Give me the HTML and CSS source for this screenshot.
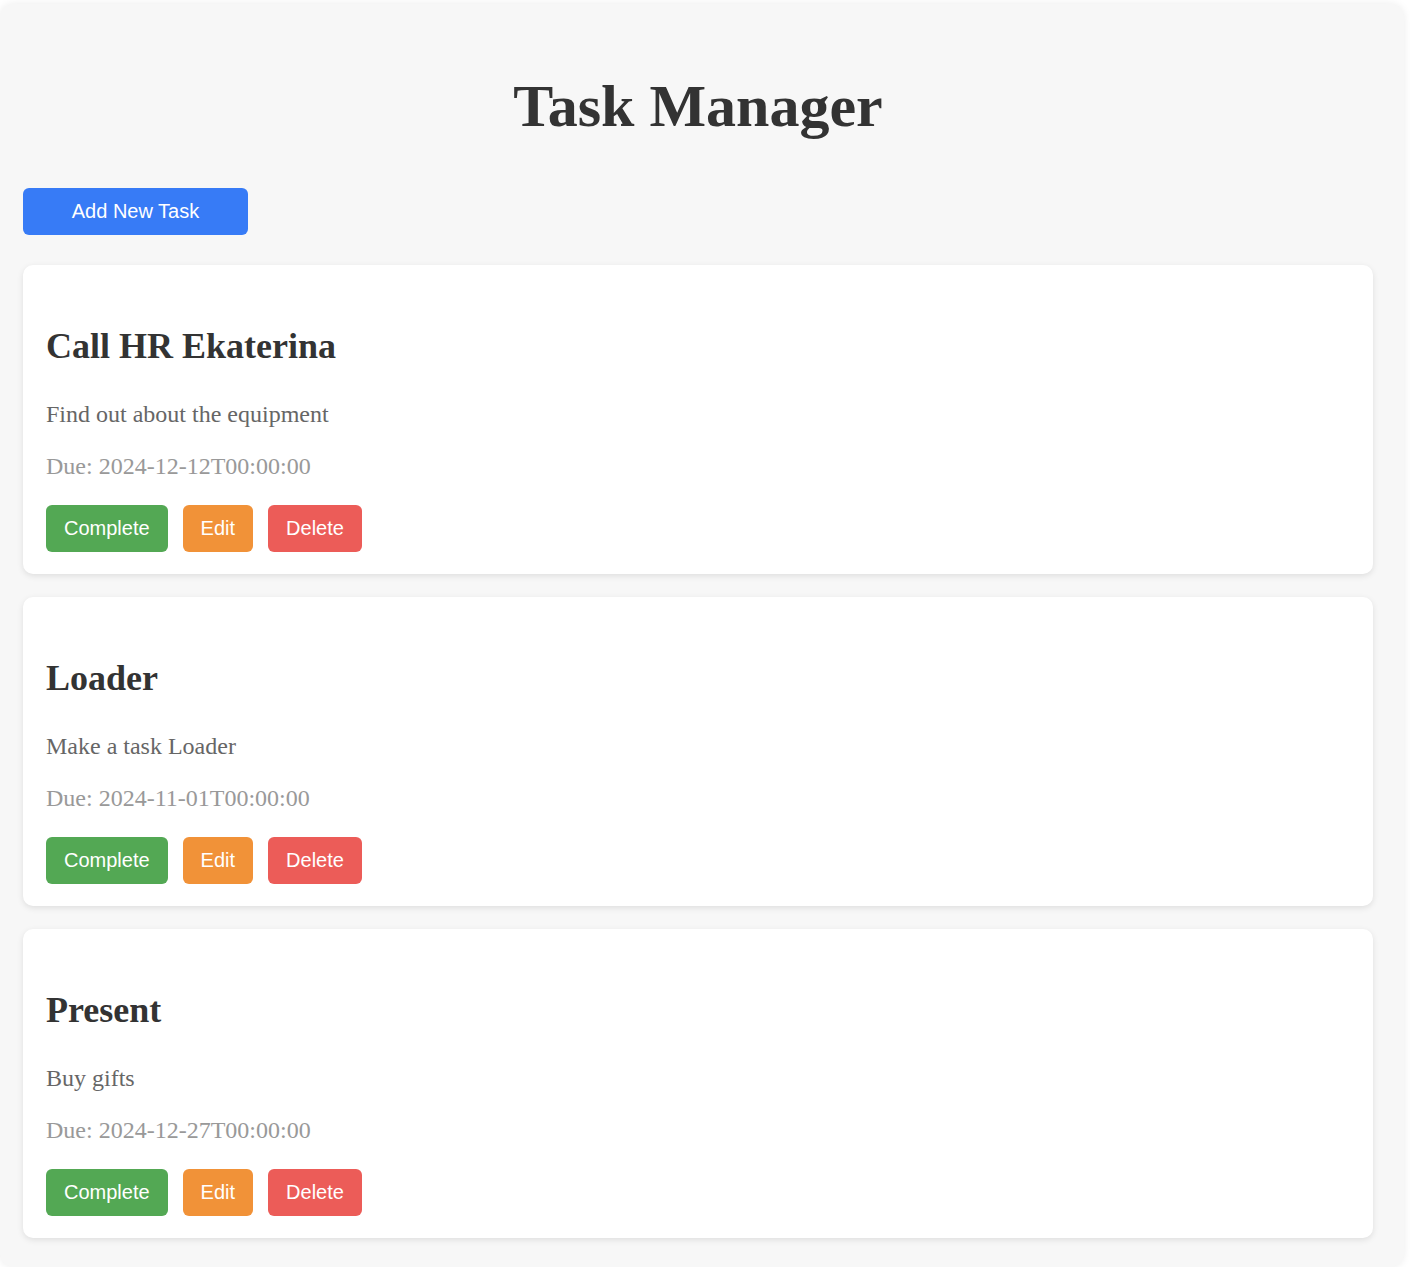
FILE: index.html
```html
<!DOCTYPE html>
<html>
<head>
<meta charset="utf-8">
<title>Task Manager</title>
<link rel="stylesheet" href="styles.css">
</head>
<body>
<div class="app">
  <h1 class="title">Task Manager</h1>
  <button class="btn btn-add">Add New Task</button>
  <div class="tasks">
    <div class="card">
      <h2 class="card-title">Call HR Ekaterina</h2>
      <p class="card-desc">Find out about the equipment</p>
      <p class="card-due">Due: 2024-12-12T00:00:00</p>
      <div class="actions">
        <button class="btn btn-complete">Complete</button>
        <button class="btn btn-edit">Edit</button>
        <button class="btn btn-delete">Delete</button>
      </div>
    </div>
    <div class="card">
      <h2 class="card-title">Loader</h2>
      <p class="card-desc">Make a task Loader</p>
      <p class="card-due">Due: 2024-11-01T00:00:00</p>
      <div class="actions">
        <button class="btn btn-complete">Complete</button>
        <button class="btn btn-edit">Edit</button>
        <button class="btn btn-delete">Delete</button>
      </div>
    </div>
    <div class="card">
      <h2 class="card-title">Present</h2>
      <p class="card-desc">Buy gifts</p>
      <p class="card-due">Due: 2024-12-27T00:00:00</p>
      <div class="actions">
        <button class="btn btn-complete">Complete</button>
        <button class="btn btn-edit">Edit</button>
        <button class="btn btn-delete">Delete</button>
      </div>
    </div>
  </div>
</div>
</body>
</html>
```
FILE: styles.css
```css
html, body {
  margin: 0;
  padding: 0;
  background: #ffffff;
}

body {
  font-family: "Liberation Serif", "Times New Roman", serif;
  color: #333333;
}

.app {
  margin: 4px 6px 0 0;
  padding: 20px 31px 30px 23px;
  background: #f7f7f7;
  border-radius: 14px;
  box-shadow: 0 0 8px rgba(0, 0, 0, 0.08);
  height: 1263px;
  box-sizing: border-box;
}

.title {
  margin: 47px 0 47px 0;
  text-align: center;
  font-size: 60px;
  font-weight: bold;
  line-height: 70px;
  color: #333333;
}

.btn {
  font-family: "Liberation Sans", Arial, sans-serif;
  font-size: 20px;
  line-height: 23px;
  color: #ffffff;
  border: none;
  border-radius: 6px;
  padding: 12px 18px;
  cursor: pointer;
}

.btn-add {
  display: block;
  width: 225px;
  background: #377bf6;
  margin-bottom: 30px;
}

.tasks {
  display: flex;
  flex-direction: column;
  gap: 23px;
}

.card {
  background: #ffffff;
  border-radius: 10px;
  box-shadow: 0 2px 6px rgba(0, 0, 0, 0.1);
  padding: 22px 23px 22px 23px;
  height: 309px;
  box-sizing: border-box;
}

.card-title {
  margin: 38px 0 33px 0;
  font-size: 36px;
  line-height: 42px;
  font-weight: bold;
  color: #333333;
}

.card-desc {
  margin: 0 0 24px 0;
  font-size: 24px;
  line-height: 28px;
  color: #666666;
}

.card-due {
  margin: 0 0 25px 0;
  font-size: 24px;
  line-height: 28px;
  color: #999999;
}

.actions {
  display: flex;
  gap: 15px;
}

.btn-complete {
  background: #53a854;
}

.btn-edit {
  background: #f19238;
}

.btn-delete {
  background: #ec5c58;
}
```
